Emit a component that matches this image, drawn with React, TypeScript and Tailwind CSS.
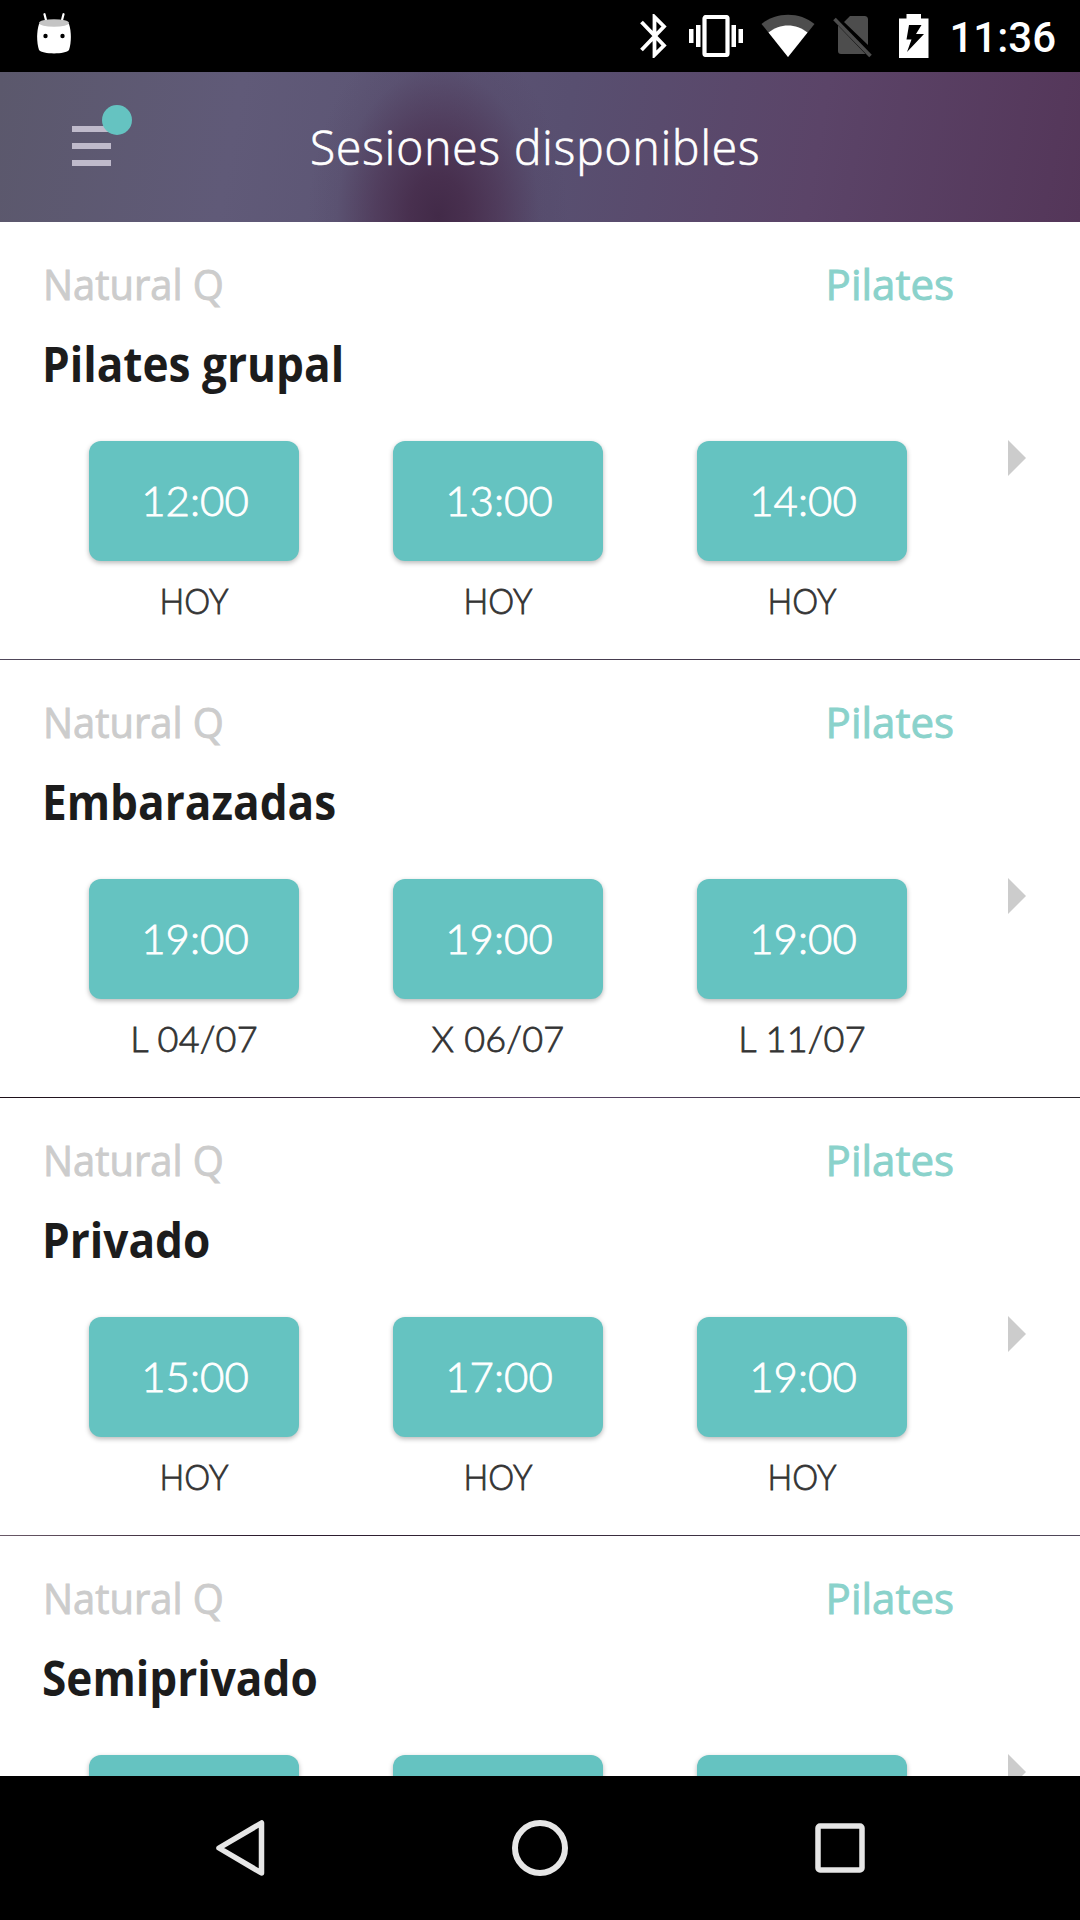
import { clsx } from "clsx";

type Slot = { time: string; day: string };
type Session = { center: string; category: string; name: string; slots: Slot[] };

const sessions: Session[] = [
  {
    center: "Natural Q",
    category: "Pilates",
    name: "Pilates grupal",
    slots: [
      { time: "12:00", day: "HOY" },
      { time: "13:00", day: "HOY" },
      { time: "14:00", day: "HOY" },
    ],
  },
  {
    center: "Natural Q",
    category: "Pilates",
    name: "Embarazadas",
    slots: [
      { time: "19:00", day: "L 04/07" },
      { time: "19:00", day: "X 06/07" },
      { time: "19:00", day: "L 11/07" },
    ],
  },
  {
    center: "Natural Q",
    category: "Pilates",
    name: "Privado",
    slots: [
      { time: "15:00", day: "HOY" },
      { time: "17:00", day: "HOY" },
      { time: "19:00", day: "HOY" },
    ],
  },
  {
    center: "Natural Q",
    category: "Pilates",
    name: "Semiprivado",
    slots: [
      { time: "", day: "" },
      { time: "", day: "" },
      { time: "", day: "" },
    ],
  },
];

const dividers = [
  "bg-gradient-to-r from-[#50485a] to-[#3f3347]",
  "bg-gradient-to-r from-[#1c0f18] via-[#5a4568] to-[#2a252b]",
  "bg-gradient-to-r from-[#6a5a68] via-[#2a1a2c] via-25% to-[#50485a]",
  "bg-[#50485a]",
];

function StatusBar() {
  return (
    <div className="flex h-[72px] shrink-0 items-center justify-between bg-black pl-[37px] pr-6">
      {/* Robot head */}
      <svg width="34" height="41" viewBox="0 0 34 41" className="-mt-[6px]">
        <path d="M7.500 1.200L9.500 9M26.500 1.200L24.500 9" stroke="#fff" strokeWidth="2.200" strokeLinecap="round" />
        <path d="M2 11C9 7 25 7 32 11C34.500 19 34.500 29 32 37C29 41.500 5 41.500 2 37C-0.500 29 -0.500 19 2 11Z" fill="#fff" />
        <ellipse cx="17" cy="10" rx="15" ry="3.800" fill="#c4c4c4" />
        <circle cx="8.500" cy="23" r="2.200" />
        <circle cx="25.500" cy="23" r="2.200" />
      </svg>
      <div className="flex items-center">
        <svg width="27" height="44" viewBox="0 0 27 44">
          <path d="M1.500 8L24 31.500L14.500 41V3L24 12.500L1.500 36" fill="none" stroke="#fff" strokeWidth="3.800" />
        </svg>
        <svg width="54" height="42" viewBox="0 0 54 42" className="ml-[22px]" fill="#fff">
          <rect x="15.500" y="2" width="23" height="38" rx="1.500" fill="none" stroke="#fff" strokeWidth="4.200" />
          <path d="M0 14h4.500v14H0zM7 10h4.500v22H7zM42.500 10H47v22h-4.500zM49.500 14H54v14h-4.500z" />
        </svg>
        <svg width="54" height="44" viewBox="0 0 54 44" className="ml-[18px]">
          <path d="M27 43L0.500 10C15 -2.500 39 -2.500 53.500 10Z" fill="#4d4d4d" />
          <path d="M27 43L7.500 18.500C19 9 35 9 46.500 18.500Z" fill="#fff" />
        </svg>
        <svg width="39" height="44" viewBox="0 0 39 44" className="ml-[18px]">
          <path d="M11 8L17 2H31.500Q35 2 35 5.500V31ZM5 11.500L32.500 40H8Q5 40 5 37Z" fill="#4d4d4d" />
          <path d="M1.500 5L37.500 42" stroke="#4d4d4d" strokeWidth="3.600" />
        </svg>
        <svg width="30" height="44" viewBox="0 0 30 44" className="ml-[27px]">
          <path d="M0 4.500H7.500V0H22V4.500H29.500V44H0Z" fill="#fff" />
          <path d="M10 11H22.500L17 20H25L8 38L12.500 25.500H7.500Z" />
        </svg>
        <span className="mt-[4px] ml-[20px] font-['Roboto',sans-serif] text-[42px] leading-none font-medium text-white">11:36</span>
      </div>
    </div>
  );
}

function Header() {
  return (
    <header className="flex h-[150px] shrink-0 items-center bg-[radial-gradient(130px_190px_at_438px_145px,#422a48_0%,#462c4be6_22%,#4a3050a0_48%,#50406030_78%,transparent_100%),linear-gradient(100deg,#5b586c_0%,#605a78_22%,#584f70_52%,#5b4468_75%,#543659_100%)] pl-[72px]">
      <button className="relative -mt-[2px] flex w-[39px] flex-col gap-[11px]">
        <span className="h-[6px] bg-[#bfbacb]" />
        <span className="h-[6px] bg-[#bfbacb]" />
        <span className="h-[6px] bg-[#bfbacb]" />
        <span className="absolute -top-[21px] left-[30px] h-[30px] w-[30px] rounded-full bg-[#65c3c1]" />
      </button>
      <h1 className="ml-[199px] origin-left scale-x-[0.96] font-['Open_Sans',sans-serif] text-[48px] font-light tracking-[1px] whitespace-nowrap text-white [-webkit-text-stroke:0.700px_#fff]">
        Sesiones disponibles
      </h1>
    </header>
  );
}

function SessionRow({ session, divider }: { session: Session; divider: string }) {
  return (
    <section className="flex h-[438px] shrink-0 flex-col">
      <div className="flex h-[124px] justify-between pt-[32px] pr-[126px] pl-[43px] font-['Open_Sans',sans-serif] text-[42px] leading-[60px] font-medium">
        <span className="origin-left scale-x-[0.95] text-[#ccc] [-webkit-text-stroke:0.900px_#ccc]">{session.center}</span>
        <span className="text-[#8ad2cb] [-webkit-text-stroke:0.900px_#8ad2cb]">{session.category}</span>
      </div>
      <h2 className="-mt-[17px] ml-[42px] h-[70px] origin-left scale-x-[0.92] font-['Open_Sans',sans-serif] text-[48px] leading-[70px] font-bold text-[#1c1c1c]">
        {session.name}
      </h2>
      <div className="mt-[42px] flex flex-1 items-start pl-[42px]">
        {session.slots.map((slot, i) => (
          <div key={i} className="flex w-[304px] flex-col items-center">
            <button className="h-[120px] w-[210px] rounded-[12px] bg-[#65c3c1] pb-[2px] pl-[2px] font-['Lato',sans-serif] text-[42px] font-light text-white shadow-[0_2px_5px_rgba(0,0,0,0.28)] [-webkit-text-stroke:0.800px_#fff]">
              {slot.time}
            </button>
            <span
              className={clsx(
                "mt-[17px] font-['Lato',sans-serif] text-[36px] leading-[44px] font-light text-[#333] [-webkit-text-stroke:0.800px_#333]",
                slot.day === "HOY" ? "scale-x-[0.91]" : "tracking-[0.200px]"
              )}
            >
              {slot.day}
            </span>
          </div>
        ))}
        <svg width="18" height="36" viewBox="0 0 18 36" className="-mt-px ml-[54px]">
          <path d="M0 0L18 18L0 36Z" fill="#ccc" />
        </svg>
      </div>
      <div className={clsx("h-px", divider)} />
    </section>
  );
}

function NavBar() {
  return (
    <nav className="flex h-[144px] shrink-0 items-center justify-between bg-black pr-[215px] pl-[215px]">
      <svg width="50" height="58" viewBox="0 0 50 58" fill="none" stroke="#e6e6e6" strokeWidth="5.500" strokeLinejoin="round">
        <path d="M46.500 4V54L4 29Z" />
      </svg>
      <svg width="56" height="56" viewBox="0 0 56 56" fill="none" stroke="#e6e6e6" strokeWidth="6">
        <circle cx="28" cy="28" r="25" />
      </svg>
      <svg width="50" height="50" viewBox="0 0 50 50" fill="none" stroke="#e6e6e6" strokeWidth="5.500">
        <rect x="3" y="3" width="44" height="44" rx="2" />
      </svg>
    </nav>
  );
}

export default function App() {
  return (
    <div className="flex h-[1920px] w-[1080px] flex-col overflow-hidden bg-white">
      <StatusBar />
      <Header />
      <main className="flex min-h-0 flex-1 flex-col overflow-hidden">
        {sessions.map((session, i) => (
          <SessionRow key={session.name} session={session} divider={dividers[i]} />
        ))}
      </main>
      <NavBar />
    </div>
  );
}
